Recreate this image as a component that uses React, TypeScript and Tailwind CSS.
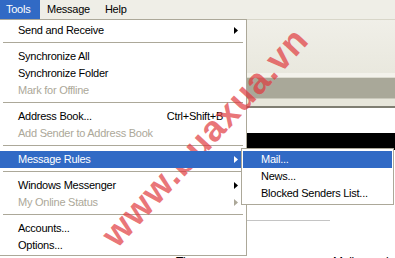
import React from 'react';

type Row =
  | { kind: 'sep' }
  | {
      kind: 'item';
      label: string;
      disabled?: boolean;
      arrow?: boolean;
      shortcut?: string;
      active?: boolean;
    };

const toolsMenu: Row[] = [
  { kind: 'item', label: 'Send and Receive', arrow: true },
  { kind: 'sep' },
  { kind: 'item', label: 'Synchronize All' },
  { kind: 'item', label: 'Synchronize Folder' },
  { kind: 'item', label: 'Mark for Offline', disabled: true },
  { kind: 'sep' },
  { kind: 'item', label: 'Address Book...', shortcut: 'Ctrl+Shift+B' },
  { kind: 'item', label: 'Add Sender to Address Book', disabled: true },
  { kind: 'sep' },
  { kind: 'item', label: 'Message Rules', arrow: true, active: true },
  { kind: 'sep' },
  { kind: 'item', label: 'Windows Messenger', arrow: true },
  { kind: 'item', label: 'My Online Status', arrow: true, disabled: true },
  { kind: 'sep' },
  { kind: 'item', label: 'Accounts...' },
  { kind: 'item', label: 'Options...' },
];

const rulesMenu = [
  { label: 'Mail...', active: true },
  { label: 'News...' },
  { label: 'Blocked Senders List...' },
];

function Arrow({ color }: { color: string }) {
  return (
    <svg width="4" height="7" viewBox="0 0 4 7" className="block">
      <path d="M0 0 L4 3.5 L0 7 Z" fill={color} />
    </svg>
  );
}

function MenuRow({ row }: { row: Row }) {
  if (row.kind === 'sep') {
    return (
      <div className="h-[9px] pt-[3px] px-[3px]">
        <div className="h-px bg-[#aca899]" />
      </div>
    );
  }
  const text = row.active ? 'text-white' : row.disabled ? 'text-[#aca899]' : 'text-black';
  return (
    <div
      className={`h-[17px] flex items-center pl-[18px] leading-[17px] whitespace-nowrap ${text} ${
        row.active ? 'relative z-20 bg-[#316ac5]' : ''
      }`}
    >
      <span>{row.label}</span>
      <span className="ml-auto">{row.shortcut}</span>
      <div className="w-[23px] flex items-center pl-[11px]">
        {row.arrow && (
          <Arrow color={row.active ? '#ffffff' : row.disabled ? '#aca899' : '#000000'} />
        )}
      </div>
    </div>
  );
}

export default function App() {
  return (
    <div
      className="relative w-[395px] h-[258px] overflow-hidden bg-white text-[11px] tracking-[-0.25px] text-black"
      style={{ fontFamily: '"Liberation Sans", Arial, sans-serif' }}
    >
      {/* menu bar */}
      <div className="flex h-[19px] leading-[19px] bg-[#efeee7]">
        <div className="pl-[6px] pr-[7px] w-[40px] bg-[#316ac5] text-white">Tools</div>
        <div className="pl-[7px] pr-[8px]">Message</div>
        <div className="pl-[7px]">Help</div>
      </div>

      {/* window content behind the menu */}
      <div className="flex flex-col">
        <div className="h-px bg-[#d8d6c9]" />
        <div className="h-[53px] bg-gradient-to-b from-[#f0efe8] to-[#e9e8de]" />
        <div className="h-[5px] bg-[#f3f2eb] border-b border-[#dcdbd0]" />
        <div className="h-[20px] bg-[#a9a899]" />
        <div className="h-[8px] bg-[#e7e6db] border-t border-[#c9c8bb]" />
        <div className="h-[2px] bg-[#7f7e72]" />
        <div className="h-[25px] bg-white" />
        <div className="h-[17px] bg-black" />
        <div className="h-[70px] bg-white" />
        <div className="ml-[200px] w-[130px] h-px bg-[#c4c4c4]" />
        <div className="h-[33px]" />
        <div className="relative h-[17px] leading-[17px] text-[12px]">
          <span className="absolute left-[176px] top-0">Th</span>
          <span className="absolute left-[333px] top-0">Mail</span>
          <span className="absolute left-[386px] top-0">k</span>
        </div>
      </div>

      {/* Tools dropdown */}
      <div className="absolute left-0 top-[19px] w-[247px] bg-white border-t border-r border-b border-[#aca899] pt-[2px] pb-[1px]">
        {toolsMenu.map((row, i) => (
          <MenuRow key={i} row={row} />
        ))}
      </div>

      {/* Message Rules submenu */}
      <div className="absolute z-30 left-[241px] top-[148px] w-[153px] bg-white border border-[#aca899] py-[2px]">
        {rulesMenu.map((r) => (
          <div
            key={r.label}
            className={`h-[17px] leading-[17px] mx-px pl-[18px] whitespace-nowrap ${
              r.active ? 'bg-[#316ac5] text-white' : 'text-black'
            }`}
          >
            {r.label}
          </div>
        ))}
      </div>

      {/* watermark */}
      <div className="pointer-events-none absolute z-10 left-[205px] top-[137px] -translate-x-1/2 -translate-y-1/2 -rotate-[47deg] whitespace-nowrap text-[36px] font-bold tracking-[1px] leading-none text-[#e0393d]/70">
        www.buaxua.vn
      </div>
    </div>
  );
}
